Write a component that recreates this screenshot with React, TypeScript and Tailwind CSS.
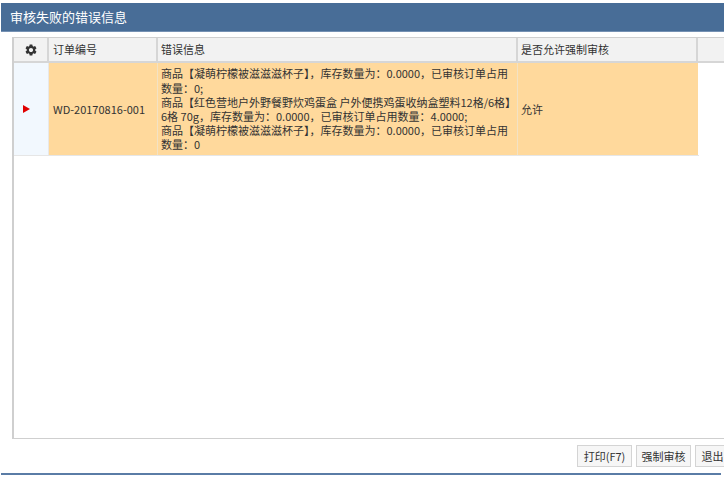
import React from "react";

const F = { fontFamily: '"Noto Sans CJK SC", "Noto Sans", sans-serif' };

function Gear() {
  return (
    <svg width="14" height="14" viewBox="0 0 24 24" fill="#333">
      <path d="M19.14 12.94c.04-.3.06-.61.06-.94 0-.32-.02-.64-.07-.94l2.03-1.58a.49.49 0 0 0 .12-.61l-1.92-3.32a.488.488 0 0 0-.59-.22l-2.39.96c-.5-.38-1.03-.7-1.62-.94l-.36-2.54a.484.484 0 0 0-.48-.41h-3.84c-.24 0-.43.17-.47.41l-.36 2.54c-.59.24-1.13.57-1.62.94l-2.39-.96c-.22-.08-.47 0-.59.22L2.74 8.87c-.12.21-.08.47.12.61l2.03 1.58c-.05.3-.09.63-.09.94s.02.64.07.94l-2.03 1.58a.49.49 0 0 0-.12.61l1.92 3.32c.12.22.37.29.59.22l2.39-.96c.5.38 1.03.7 1.62.94l.36 2.54c.05.24.24.41.48.41h3.84c.24 0 .44-.17.47-.41l.36-2.54c.59-.24 1.13-.56 1.62-.94l2.39.96c.22.08.47 0 .59-.22l1.92-3.32c.12-.22.07-.47-.12-.61l-2.01-1.58zM12 15.6c-1.98 0-3.6-1.62-3.6-3.6s1.62-3.6 3.6-3.6 3.6 1.62 3.6 3.6-1.62 3.6-3.6 3.6z" />
    </svg>
  );
}

export default function App() {
  const lines = [
    "商品【凝萌柠檬被滋滋滋杯子】，库存数量为：0.0000，已审核订单占用",
    "数量：0;",
    "商品【红色营地户外野餐野炊鸡蛋盒 户外便携鸡蛋收纳盒塑料12格/6格】",
    "6格 70g，库存数量为：0.0000，已审核订单占用数量：4.0000;",
    "商品【凝萌柠檬被滋滋滋杯子】，库存数量为：0.0000，已审核订单占用",
    "数量：0",
  ];
  return (
    <div className="w-[724px] h-[478px] bg-white overflow-hidden text-[#333] text-[11px]" style={F}>
      <div className="h-[3px]" />
      <div className="ml-[1px] h-[29px] bg-[#486d97] flex items-center pl-[9px] text-white text-[13px] border-b border-[#7591b3]">
        审核失败的错误信息
      </div>
      <div className="h-[5px]" />
      <div className="ml-[12px] w-[730px] h-[402px] border border-[#cfcfcf] border-l-2 bg-white flex flex-col">
        <div className="flex h-[25px] bg-[#f2f2f2] border-b-2 border-[#d6d6d6]">
          <div className="w-[35px] border-r-2 border-[#d6d6d6] flex items-center justify-center"><Gear /></div>
          <div className="w-[109px] border-r-2 border-[#d6d6d6] flex items-center pl-[4px]">订单编号</div>
          <div className="w-[360px] border-r-2 border-[#d6d6d6] flex items-center pl-[3px]">错误信息</div>
          <div className="w-[180px] border-r-2 border-[#d6d6d6] flex items-center pl-[3px]">是否允许强制审核</div>
          <div className="flex-1" />
        </div>
        <div className="flex h-[93px] border-b border-[#e6e6e6] w-[685px]">
          <div className="w-[35px] bg-[#f2f8fe] border-r border-[#e8e8e8] flex items-center justify-center">
            <div className="w-0 h-0 border-y-[4px] border-y-transparent border-l-[7px] border-l-[#e00000] ml-[-10px]" />
          </div>
          <div className="w-[109px] bg-[#ffd99c] border-r border-[#f3e2c4] flex items-center pl-[4px]">WD-20170816-001</div>
          <div className="w-[360px] bg-[#ffd99c] border-r border-[#f3e2c4] flex flex-col justify-center pl-[3px] leading-[14.2px]">
            {lines.map((l, i) => (
              <div key={i} className="whitespace-nowrap">{l}</div>
            ))}
          </div>
          <div className="w-[180px] bg-[#ffd99c] flex items-center pl-[3px]">允许</div>
        </div>
      </div>
      <div className="flex justify-end gap-[4px] mt-[6px] mr-[-6px] h-[22px]">
        <div className="w-[55px] border border-[#d4d4d4] bg-[#f6f6f6] flex items-center justify-center">打印(F7)</div>
        <div className="w-[55px] border border-[#d4d4d4] bg-[#f6f6f6] flex items-center justify-center">强制审核</div>
        <div className="w-[35px] border border-[#d4d4d4] bg-[#f6f6f6] flex items-center justify-center">退出</div>
      </div>
      <div className="ml-[1px] mt-[6px] h-[2px] bg-[#5a7ca6] w-[720px]" />
    </div>
  );
}
